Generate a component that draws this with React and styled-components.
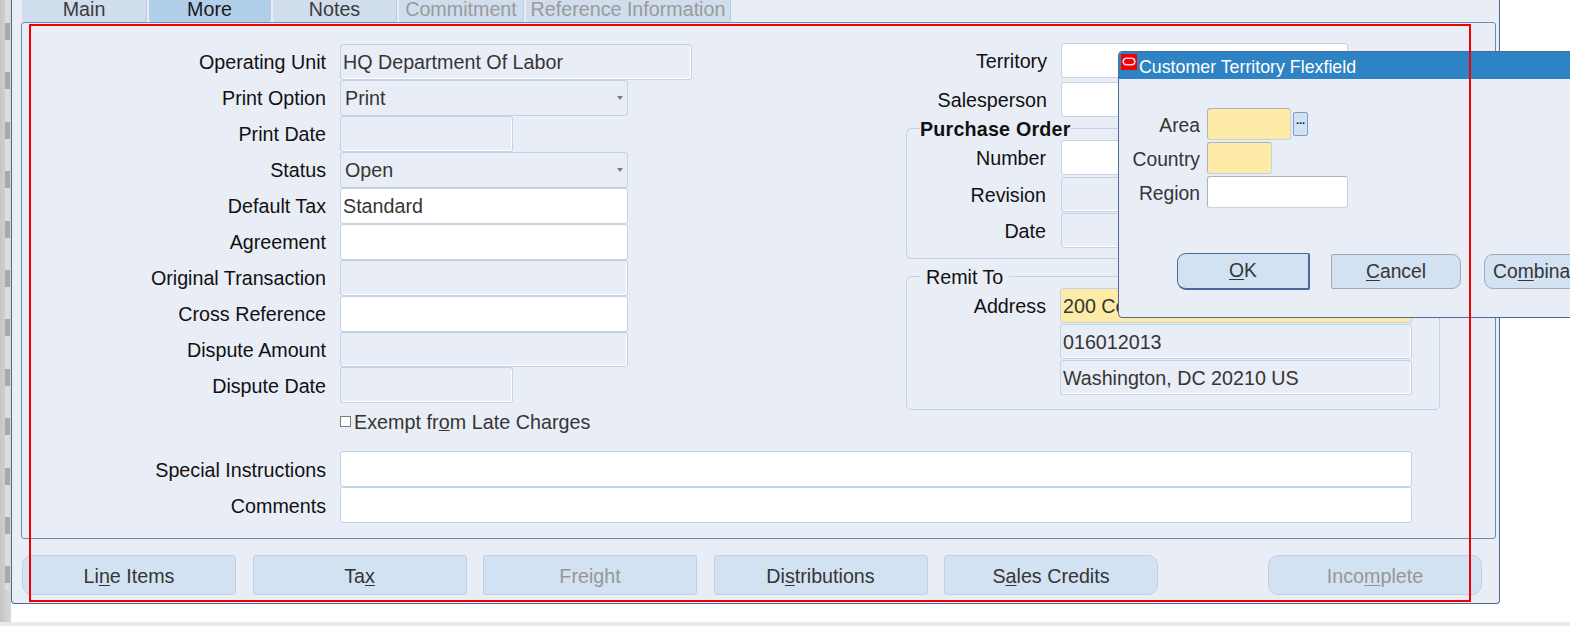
import React from "react";
import styled, { createGlobalStyle } from "styled-components";

const GlobalStyle = createGlobalStyle`
  html, body {
    margin: 0;
    padding: 0;
    background: #fff;
  }
  * {
    box-sizing: border-box;
  }
`;

const tabs = [
  { name: "Main", width: 125 },
  { name: "More", width: 122, active: true },
  { name: "Notes", width: 124 },
  { name: "Commitment", width: 125, disabled: true },
  { name: "Reference Information", width: 205, disabled: true },
];

const leftFields = [
  { label: "Operating Unit", kind: "readonly", width: 352, value: "HQ Department Of Labor" },
  { label: "Print Option", kind: "select", width: 288, value: "Print" },
  { label: "Print Date", kind: "readonly", width: 173 },
  { label: "Status", kind: "select", width: 288, value: "Open" },
  { label: "Default Tax", kind: "input", width: 288, value: "Standard" },
  { label: "Agreement", kind: "input", width: 288 },
  { label: "Original Transaction", kind: "readonly", width: 288 },
  { label: "Cross Reference", kind: "input", width: 288 },
  { label: "Dispute Amount", kind: "readonly", width: 288 },
  { label: "Dispute Date", kind: "readonly", width: 173 },
];

const App = () => {
  return (
    <Page>
      <GlobalStyle />
      <Desktop>
        <LeftStrip />
        <Window>
          <TabBar>
            {tabs.map((tab) => (
              <Tab key={tab.name} $width={tab.width} $active={tab.active} $disabled={tab.disabled}>
                {tab.name}
              </Tab>
            ))}
          </TabBar>
          <TabPanel>
            <TopSection>
              <LeftColumn>
                {leftFields.map((field) => (
                  <FormRow key={field.label}>
                    <Label>{field.label}</Label>
                    <Field $kind={field.kind} $width={field.width}>
                      {field.value}
                    </Field>
                  </FormRow>
                ))}
                <CheckRow>
                  <CheckBox />
                  <CheckLabel>
                    Exempt fr<u>o</u>m Late Charges
                  </CheckLabel>
                </CheckRow>
              </LeftColumn>
              <RightColumn>
                <PlainRows>
                  <SideRow>
                    <SideLabel>Territory</SideLabel>
                    <Field $kind="input" $width={287} />
                  </SideRow>
                  <SideRow>
                    <SideLabel>Salesperson</SideLabel>
                    <Field $kind="input" $width={287} />
                  </SideRow>
                </PlainRows>
                <GroupBox $height={131}>
                  <Legend $bold $left={13}>
                    Purchase Order
                  </Legend>
                  <BoxRows $gap="1.5px">
                    <BoxRow>
                      <BoxLabel>Number</BoxLabel>
                      <Field $kind="input" $width={287} />
                    </BoxRow>
                    <BoxRow>
                      <BoxLabel>Revision</BoxLabel>
                      <Field $kind="readonly" $width={172} />
                    </BoxRow>
                    <BoxRow>
                      <BoxLabel>Date</BoxLabel>
                      <Field $kind="readonly" $width={172} />
                    </BoxRow>
                  </BoxRows>
                </GroupBox>
                <GroupBox $height={134} $second>
                  <Legend $left={13}>Remit To</Legend>
                  <BoxRows $gap="1px">
                    <BoxRow $tight>
                      <BoxLabel>Address</BoxLabel>
                      <Field $kind="required" $width={352}>
                        200 Constitution Ave NW
                      </Field>
                    </BoxRow>
                    <BoxRow $tight>
                      <span />
                      <Field $kind="readonly" $width={352}>
                        016012013
                      </Field>
                    </BoxRow>
                    <BoxRow $tight>
                      <span />
                      <Field $kind="readonly" $width={352}>
                        Washington, DC 20210 US
                      </Field>
                    </BoxRow>
                  </BoxRows>
                </GroupBox>
              </RightColumn>
            </TopSection>
            <WideRows>
              <FormRow>
                <Label>Special Instructions</Label>
                <Field $kind="input" $width={1072} />
              </FormRow>
              <FormRow>
                <Label>Comments</Label>
                <Field $kind="input" $width={1072} />
              </FormRow>
            </WideRows>
          </TabPanel>
          <ButtonBar>
            <ActionButton $shape="left">
              Li<u>n</u>e Items
            </ActionButton>
            <ActionButton>
              Ta<u>x</u>
            </ActionButton>
            <ActionButton $disabled>Freight</ActionButton>
            <ActionButton>
              Di<u>s</u>tributions
            </ActionButton>
            <ActionButton $shape="right">
              S<u>a</u>les Credits
            </ActionButton>
            <IncompleteButton $shape="both" $disabled>
              Inco<u>m</u>plete
            </IncompleteButton>
          </ButtonBar>
        </Window>
      </Desktop>
      <FooterStrip />

      <Dialog>
        <TitleBar>
          <OracleIcon viewBox="0 0 16 16">
            <rect width="16" height="16" fill="#f00000" />
            <rect x="2.2" y="4.2" width="11.6" height="6.6" rx="3.3" fill="none" stroke="#ffd9d9" strokeWidth="1.6" />
          </OracleIcon>
          <TitleText>Customer Territory Flexfield</TitleText>
        </TitleBar>
        <DialogBody>
          <DialogRow>
            <DialogLabel>Area</DialogLabel>
            <DialogField $kind="required" $width={84} />
            <LovButton>...</LovButton>
          </DialogRow>
          <DialogRow>
            <DialogLabel>Country</DialogLabel>
            <DialogField $kind="required" $width={65} />
          </DialogRow>
          <DialogRow>
            <DialogLabel>Region</DialogLabel>
            <DialogField $kind="input" $width={141} />
          </DialogRow>
          <DialogButtons>
            <DialogButton $width={133} $default $shape="left">
              <u>O</u>K
            </DialogButton>
            <DialogButton $width={130} $shape="right">
              <u>C</u>ancel
            </DialogButton>
            <CombinationsButton $width={150} $shape="left" $alignLeft>
              Co<u>m</u>binations
            </CombinationsButton>
          </DialogButtons>
        </DialogBody>
      </Dialog>

      <RedFrame />
    </Page>
  );
};

const fontStack = `"Liberation Sans", Arial, sans-serif`;

const fieldBackground = {
  readonly: "#e9edf5",
  select: "#e9edf5",
  input: "#ffffff",
  required: "#feeba8",
};

const buttonRadius = {
  left: "10px 3px 3px 10px",
  right: "3px 10px 10px 3px",
  both: "10px",
};

const Page = styled.div`
  position: relative;
  width: 1570px;
  height: 626px;
  overflow: hidden;
  background: #fff;
  font-family: ${fontStack};
  font-size: 19.7px;
`;

const Desktop = styled.div`
  display: flex;
  height: 622px;
`;

const LeftStrip = styled.div`
  flex: 0 0 11px;
  height: 100%;
  background:
    repeating-linear-gradient(
        to bottom,
        #dcdcdc 0,
        #dcdcdc 23px,
        #a9a9a9 23px,
        #a9a9a9 40px,
        #dcdcdc 40px,
        #dcdcdc 49.4px
      )
      5px 0 / 5px 590px no-repeat,
    linear-gradient(to right, #c6c6c6, #d8d8d8);
`;

const Window = styled.div`
  flex: 0 0 1489px;
  height: 604px;
  background: #e9edf5;
  border-left: 1px solid #4d6a94;
  border-right: 1px solid #4d6a94;
  border-bottom: 1px solid #4d6a94;
  border-radius: 0 0 4px 4px;
`;

const TabBar = styled.div`
  display: flex;
  align-items: flex-end;
  height: 22px;
  padding-left: 10px;
  gap: 2px;
  overflow: hidden;
`;

const Tab = styled.div`
  flex: 0 0 ${(p) => p.$width}px;
  height: 22px;
  display: flex;
  align-items: flex-end;
  justify-content: center;
  padding-bottom: 3px;
  line-height: 20px;
  background: ${(p) => (p.$active ? "#b2cfe9" : "#d0dded")};
  border-right: 1px solid #b9c9de;
  border-radius: 0 0 3px 3px;
  color: ${(p) => (p.$disabled ? "#9a9a9a" : p.$active ? "#1a1a1a" : "#3c3c3c")};
`;

const TabPanel = styled.div`
  width: 1475px;
  height: 517px;
  margin-left: 9px;
  padding-top: 20px;
  border: 1px solid #6d8cab;
  border-radius: 3px;
`;

const TopSection = styled.div`
  display: flex;
`;

const LeftColumn = styled.div`
  flex: 0 0 884px;
  padding-top: 1px;
`;

const FormRow = styled.div`
  display: grid;
  grid-template-columns: 304px auto;
  column-gap: 14px;
  justify-content: start;
  height: 35.95px;
`;

const Label = styled.div`
  align-self: center;
  padding-top: 2px;
  text-align: right;
  color: #111;
  white-space: nowrap;
`;

const Field = styled.div`
  width: ${(p) => p.$width}px;
  height: 100%;
  padding: 2px 0 0 ${(p) => (p.$kind === "select" ? 4 : 2)}px;
  display: flex;
  align-items: center;
  position: relative;
  color: #353535;
  white-space: nowrap;
  overflow: hidden;
  background: ${(p) => fieldBackground[p.$kind]};
  border: 1px solid #c2d2e7;
  border-radius: 3px;
  box-shadow: ${(p) => (p.$kind === "readonly" ? "inset -1px -1px 0 #fff" : "none")};

  &::after {
    content: "";
    display: ${(p) => (p.$kind === "select" ? "block" : "none")};
    position: absolute;
    right: 4px;
    top: 15px;
    border-left: 3.5px solid transparent;
    border-right: 3.5px solid transparent;
    border-top: 4px solid #77778a;
  }
`;

const CheckRow = styled.div`
  display: flex;
  align-items: center;
  height: 36px;
  margin-left: 318px;
`;

const CheckBox = styled.div`
  width: 11px;
  height: 11px;
  background: #fff;
  border: 1px solid #7c7c7c;
`;

const CheckLabel = styled.div`
  margin-left: 3px;
  padding-top: 2px;
  color: #353535;
  letter-spacing: 0.05px;
`;

const RightColumn = styled.div`
  flex: 0 0 534px;
`;

const PlainRows = styled.div`
  display: flex;
  flex-direction: column;
  gap: 4px;
`;

const SideRow = styled.div`
  display: grid;
  grid-template-columns: 141px auto;
  column-gap: 14px;
  justify-content: start;
  height: 35px;
`;

const SideLabel = styled(Label)``;

const GroupBox = styled.div`
  position: relative;
  height: ${(p) => p.$height}px;
  margin-top: ${(p) => (p.$second ? 17 : 11)}px;
  padding-top: 11px;
  border: 1px solid #c2d2e7;
  border-radius: 5px;
`;

const Legend = styled.div`
  position: absolute;
  top: -11px;
  left: ${(p) => p.$left}px;
  padding: 0 ${(p) => (p.$bold ? 0 : 6)}px;
  background: #e9edf5;
  color: #111;
  font-weight: ${(p) => (p.$bold ? 700 : 400)};
  letter-spacing: ${(p) => (p.$bold ? "0.2px" : "0")};
  line-height: 22px;
  white-space: nowrap;
`;

const BoxRows = styled.div`
  display: flex;
  flex-direction: column;
  gap: ${(p) => p.$gap};
`;

const BoxRow = styled.div`
  display: grid;
  grid-template-columns: 139px auto;
  column-gap: ${(p) => (p.$tight ? 14 : 15)}px;
  justify-content: start;
  height: 35px;
`;

const BoxLabel = styled(Label)``;

const WideRows = styled.div`
  margin-top: 12px;
`;

const ButtonBar = styled.div`
  display: flex;
  gap: 16.5px;
  height: 40px;
  margin-top: 16px;
  padding: 0 17px 0 10px;
`;

const ActionButton = styled.div`
  flex: 0 0 214px;
  display: flex;
  align-items: center;
  justify-content: center;
  padding-top: 2px;
  background: #d2e2f3;
  border: 1px solid #bfd1e6;
  border-radius: ${(p) => buttonRadius[p.$shape] || "3px"};
  color: ${(p) => (p.$disabled ? "#969696" : "#353535")};

  u {
    text-underline-offset: 2px;
  }
`;

const IncompleteButton = styled(ActionButton)`
  margin-left: auto;
`;

const FooterStrip = styled.div`
  height: 4px;
  background: #e7eaef;
`;

const Dialog = styled.div`
  position: absolute;
  left: 1118px;
  top: 51px;
  width: 520px;
  height: 267px;
  background: #e9edf5;
  border: 1px solid #4d6a94;
  border-radius: 4px;
  overflow: hidden;
  font-size: 19.3px;
`;

const TitleBar = styled.div`
  display: flex;
  align-items: center;
  height: 27px;
  padding-left: 2px;
  background: #2d83c3;
`;

const OracleIcon = styled.svg`
  width: 16px;
  height: 16px;
  margin-top: -8px;
`;

const TitleText = styled.div`
  margin-left: 2px;
  padding-top: 4px;
  color: #fff;
  font-size: 17.8px;
`;

const DialogBody = styled.div`
  padding-top: 29px;
`;

const DialogRow = styled.div`
  display: flex;
  align-items: flex-start;
  height: 34px;
`;

const DialogLabel = styled.div`
  width: 81px;
  height: 31px;
  line-height: 35px;
  text-align: right;
  color: #353535;
`;

const DialogField = styled(Field)`
  height: 32px;
  margin-left: 7px;
  border-top-color: #aeb4bb;
  border-left-color: #aeb4bb;
`;

const LovButton = styled.div`
  width: 15px;
  height: 24px;
  margin: 4px 0 0 2px;
  background: #d2e2f3;
  border: 1px solid #7f9cc0;
  border-radius: 2px;
  color: #111;
  font-size: 11px;
  font-weight: 700;
  line-height: 15px;
  text-align: center;
`;

const DialogButtons = styled.div`
  display: flex;
  align-items: center;
  gap: 21px;
  margin-top: 43px;
  padding-left: 58px;
`;

const DialogButton = styled.div`
  flex: 0 0 ${(p) => p.$width}px;
  height: ${(p) => (p.$default ? 37 : 35)}px;
  display: flex;
  align-items: center;
  justify-content: ${(p) => (p.$alignLeft ? "flex-start" : "center")};
  padding-left: ${(p) => (p.$alignLeft ? 8 : 0)}px;
  background: #d2e2f3;
  border: 1px solid ${(p) => (p.$default ? "#456a99" : "#9fabb8")};
  border-right-width: ${(p) => (p.$default ? 2 : 1)}px;
  border-bottom-width: ${(p) => (p.$default ? 2 : 1)}px;
  border-radius: ${(p) => (p.$shape === "left" ? "9px 2px 2px 9px" : "2px 9px 9px 2px")};
  color: #353535;
  white-space: nowrap;

  u {
    text-underline-offset: 2px;
  }
`;

const CombinationsButton = styled(DialogButton)`
  margin-left: 2px;
`;

const RedFrame = styled.div`
  position: absolute;
  left: 29px;
  top: 24px;
  width: 1442px;
  height: 578px;
  border: 2px solid #f00000;
  pointer-events: none;
`;

export default App;
